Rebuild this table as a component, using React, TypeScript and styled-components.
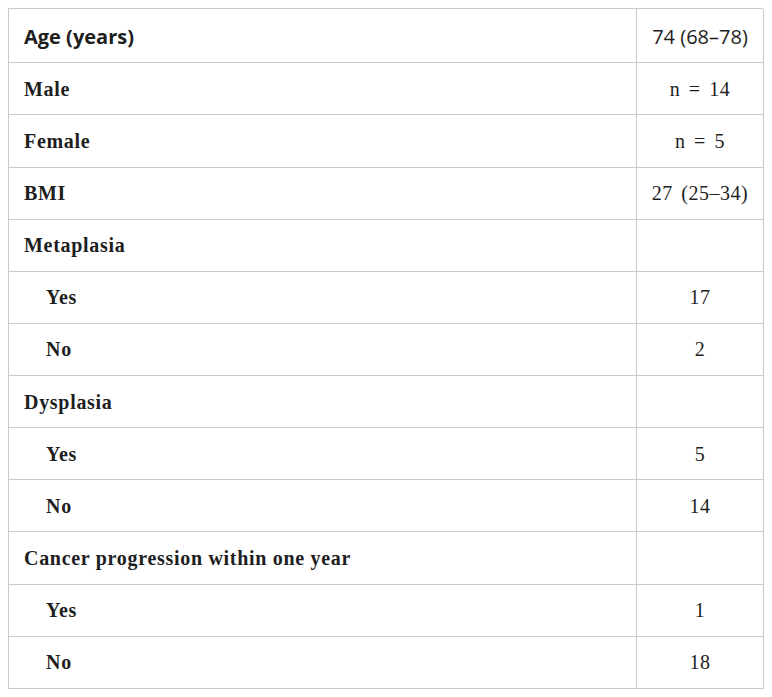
import React from "react";
import styled, { createGlobalStyle } from "styled-components";

const Global = createGlobalStyle`
  html, body { margin: 0; padding: 0; background: #ffffff; }
  body { padding: 7.5px 8px 0 8px; }
`;

const Table = styled.div`
  display: grid;
  grid-template-columns: 628px 127px;
  grid-template-rows: 54.8px repeat(12, 52.14px);
  width: 755px;
  border-top: 1px solid #cacaca;
  border-left: 1px solid #cacaca;
  box-sizing: border-box;
  color: #1e1e1e;
`;

const Cell = styled.div<{ $indent?: boolean; $center?: boolean; $head?: boolean }>`
  display: flex;
  align-items: center;
  justify-content: ${(p) => (p.$center ? "center" : "flex-start")};
  padding-left: ${(p) => (p.$center ? "0" : p.$indent ? "37px" : "15px")};
  padding-top: ${(p) => (p.$head ? "2px" : "1px")};
  border-right: 1px solid #cacaca;
  border-bottom: 1px solid #cacaca;
  box-sizing: border-box;
  font-family: "Liberation Serif", "Times New Roman", serif;
  font-weight: ${(p) => (p.$center ? 400 : 700)};
  font-size: 20px;
  letter-spacing: ${(p) => (p.$center ? "0.5px" : "0.7px")};
  word-spacing: ${(p) => (p.$center ? "3px" : "0")};
  white-space: nowrap;
`;

const HeadCell = styled(Cell)`
  font-family: "Open Sans", "Noto Sans", sans-serif;
  letter-spacing: 0;
  word-spacing: 0;
`;

type Row = { label: string; value: string; indent?: boolean };

const rows: Row[] = [
  { label: "Male", value: "n = 14" },
  { label: "Female", value: "n = 5" },
  { label: "BMI", value: "27 (25–34)" },
  { label: "Metaplasia", value: "" },
  { label: "Yes", value: "17", indent: true },
  { label: "No", value: "2", indent: true },
  { label: "Dysplasia", value: "" },
  { label: "Yes", value: "5", indent: true },
  { label: "No", value: "14", indent: true },
  { label: "Cancer progression within one year", value: "" },
  { label: "Yes", value: "1", indent: true },
  { label: "No", value: "18", indent: true },
];

export default function App() {
  return (
    <>
      <Global />
      <Table>
        <HeadCell $head>Age (years)</HeadCell>
        <HeadCell $head $center>74 (68–78)</HeadCell>
        {rows.map((r, i) => (
          <React.Fragment key={i}>
            <Cell $indent={r.indent}>{r.label}</Cell>
            <Cell $center>{r.value}</Cell>
          </React.Fragment>
        ))}
      </Table>
    </>
  );
}
